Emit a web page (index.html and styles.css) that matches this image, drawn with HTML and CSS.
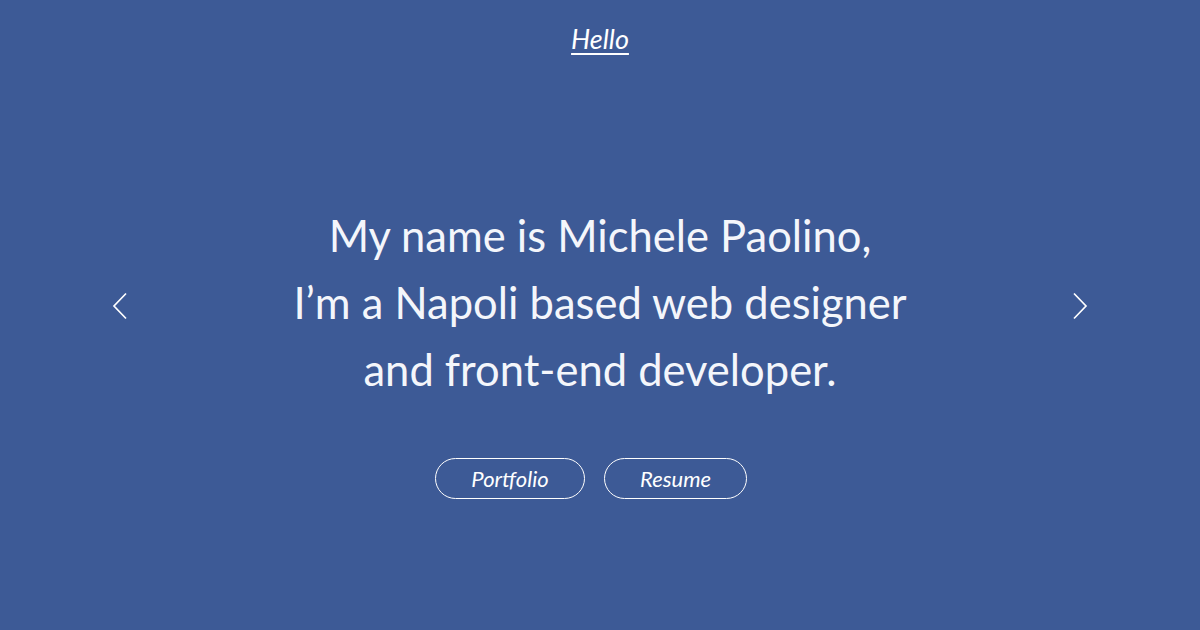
FILE: index.html
```html
<!DOCTYPE html>
<html lang="en">
<head>
<meta charset="utf-8">
<title>Michele Paolino</title>
<link rel="stylesheet" href="styles.css">
</head>
<body>
<div class="page">
  <header class="top">
    <a class="hello" href="#">Hello</a>
  </header>
  <main class="slider">
    <button class="arrow" aria-label="Previous">
      <svg width="16" height="28" viewBox="0 0 16 28"><path d="M14 1.5 L2 14 L14 26.5" fill="none" stroke="#fff" stroke-width="1.7"/></svg>
    </button>
    <section class="intro">
      <h1 class="headline">My name is Michele Paolino,<br>I’m a Napoli based web designer<br>and front-end developer.</h1>
      <div class="actions">
        <a class="btn btn-portfolio" href="#">Portfolio</a>
        <a class="btn btn-resume" href="#">Resume</a>
      </div>
    </section>
    <button class="arrow" aria-label="Next">
      <svg width="16" height="28" viewBox="0 0 16 28"><path d="M2 1.5 L14 14 L2 26.5" fill="none" stroke="#fff" stroke-width="1.7"/></svg>
    </button>
  </main>
</div>
</body>
</html>
```

FILE: styles.css
```css
* { box-sizing: border-box; }
html, body { margin: 0; padding: 0; }
body {
  background: #3d5a96;
  color: #fff;
  font-family: "Lato", "Open Sans", sans-serif;
  width: 1200px;
  height: 630px;
  overflow: hidden;
}
.page {
  display: flex;
  flex-direction: column;
  height: 630px;
}
.top {
  display: flex;
  justify-content: center;
  padding-top: 22px;
}
.hello {
  color: #fff;
  font-style: italic;
  font-size: 27px;
  line-height: 34px;
  text-decoration: underline;
  text-underline-offset: 4px;
  text-decoration-thickness: 2px;
}
.slider {
  display: flex;
  align-items: flex-start;
  justify-content: space-between;
  padding: 0 112px;
  margin-top: 146px;
}
.arrow {
  background: none;
  border: 0;
  padding: 0;
  margin-top: 90px;
  width: 16px;
  height: 28px;
  display: flex;
}
.intro {
  display: flex;
  flex-direction: column;
  align-items: center;
}
.headline {
  margin: 0;
  font-family: "Lato", sans-serif;
  font-weight: 400;
  font-size: 43.5px;
  line-height: 67px;
  text-align: center;
  color: #f4f6fb;
}
.actions {
  display: flex;
  gap: 19px;
  margin-top: 55px;
  margin-right: 18px;
}
.btn {
  display: flex;
  align-items: center;
  justify-content: center;
  height: 41px;
  border: 1.8px solid #fff;
  border-radius: 21px;
  color: #fff;
  text-decoration: none;
  font-style: italic;
  font-size: 22px;
}
.btn-portfolio { width: 150px; }
.btn-resume { width: 143px; }
```
